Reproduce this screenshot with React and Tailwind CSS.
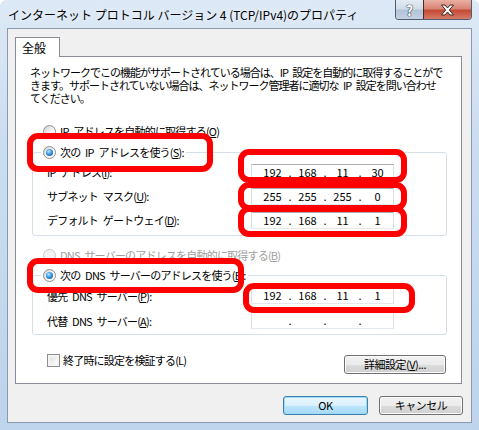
import React from 'react';

// wider space so it survives the negative tracking
const S = '\u2002';

const Radio = ({ checked, disabled }) => (
  <span
    className={`flex h-[13px] w-[13px] shrink-0 items-center justify-center rounded-full border ${
      disabled
        ? 'border-[#c9c9c9] bg-[#f3f3f3]'
        : 'border-[#8e8f8f] bg-[linear-gradient(135deg,#d3d3d3_0%,#f6f6f6_60%,#ffffff_100%)]'
    }`}
  >
    {checked && (
      <span className="h-[7px] w-[7px] rounded-full bg-[radial-gradient(circle_at_40%_35%,#bfe6ff_0%,#3a96de_45%,#0c4b92_100%)]" />
    )}
  </span>
);

const IpField = ({ parts }) => (
  <div className="flex h-[17px] w-[143px] items-center border border-[#abadb3] border-x-[#dbdfe6] border-b-[#e3e9ef] bg-white pl-[5px] text-[11px] leading-[15px]">
    {[0, 1, 2, 3].map((i) => (
      <React.Fragment key={i}>
        <span className="w-[31px] text-center">{parts ? parts[i] : ''}</span>
        {i < 3 && <span className="w-[4px] text-center">.</span>}
      </React.Fragment>
    ))}
  </div>
);

const FieldRow = ({ label, parts, h }) => (
  <div className={`flex items-center pl-[14px] ${h}`}>
    <span className="w-[204px] whitespace-nowrap text-[11px] leading-[16px] tracking-[-0.8px]">{label}</span>
    <IpField parts={parts} />
  </div>
);

const Key = ({ k }) => <span className="underline underline-offset-[1px]">{k}</span>;

const WinButton = ({ children, w, primary }) => (
  <div
    className={`flex h-[19px] items-center justify-center rounded-[3px] border text-[11px] leading-[15px] tracking-[-0.5px] ${w} ${
      primary
        ? 'border-[#3c7fb1] bg-[linear-gradient(180deg,#eaf6fd_0%,#d9f0fc_50%,#bee6fd_51%,#a7d9f5_100%)] shadow-[inset_0_0_0_1px_#9cdaf8]'
        : 'border-[#707070] bg-[linear-gradient(180deg,#f2f2f2_0%,#ebebeb_50%,#dddddd_51%,#cfcfcf_100%)] shadow-[inset_0_0_0_1px_#fbfbfb]'
    }`}
  >
    {children}
  </div>
);

const marks = [
  'left-[27px] top-[133px] w-[186px] h-[39px]',
  'left-[238px] top-[149px] w-[169px] h-[34px]',
  'left-[238px] top-[182px] w-[169px] h-[29px]',
  'left-[238px] top-[206px] w-[169px] h-[31px]',
  'left-[27px] top-[258px] w-[217px] h-[35px]',
  'left-[243px] top-[283px] w-[172px] h-[30px]',
];

export default function App() {
  return (
    <div className="relative h-[430px] w-[479px] overflow-hidden rounded-t-[6px] bg-[linear-gradient(180deg,#dde9f6_0%,#cadcf0_35%,#bed4ec_100%)] font-['Noto_Sans_CJK_JP',sans-serif] text-black">
      {/* title bar */}
      <div className="flex h-[28px] items-start">
        <div className="whitespace-nowrap pl-[8px] pt-[6px] text-[12px] leading-[18px] [text-shadow:0_0_6px_#ffffff]">
          インターネット プロトコル バージョン 4 (TCP/IPv4)のプロパティ
        </div>
        <div className="ml-auto mr-[7px] flex h-[20px] overflow-hidden rounded-b-[4px] border border-t-0 border-[#4f5d6e]">
          <div className="flex w-[27px] items-center justify-center bg-[linear-gradient(180deg,#e4ecf4_0%,#d2dde9_45%,#b3c4d7_55%,#c3d2e2_100%)] text-[14px] font-bold leading-[16px] text-white [text-shadow:0_0_1px_#2d3a48,0_0_1px_#2d3a48,0_0_1px_#2d3a48]">
            ?
          </div>
          <div className="flex w-[48px] items-center justify-center border-l border-[#4f2a24] bg-[linear-gradient(180deg,#eab0a4_0%,#d98575_45%,#c44b36_55%,#d67a66_100%)]">
            <svg width="15" height="12" viewBox="0 0 15 12">
              <path
                d="M1.5 1 L5 1 L7.5 4 L10 1 L13.5 1 L9.3 6 L13.5 11 L10 11 L7.5 8 L5 11 L1.5 11 L5.7 6 Z"
                fill="#ffffff"
                stroke="#3a2a28"
                strokeWidth="1"
                strokeLinejoin="round"
              />
            </svg>
          </div>
        </div>
      </div>

      {/* client area */}
      <div className="mx-[7px] h-[395px] border border-[#8a99ab] bg-[#f0f0f0] px-[7px] pt-[8px]">
        <div className="relative z-10 -mb-px flex h-[20px] w-[45px] items-center border border-b-0 border-[#898c95] bg-white pl-[6px] text-[12px] leading-[16px]">
          全般
        </div>
        <div className="flex h-[328px] w-[447px] flex-col border border-[#898c95] bg-white">
          <p className="mt-[9px] whitespace-nowrap pl-[14px] text-[11px] leading-[13px] tracking-[-1px]">
            ネットワークでこの機能がサポートされている場合は、IP{S}設定を自動的に取得することがで
            <br />
            きます。サポートされていない場合は、ネットワーク管理者に適切な{S}IP{S}設定を問い合わせ
            <br />
            てください。
          </p>

          <div className="mt-[18px] flex h-[16px] items-center gap-[4px] pl-[27px]">
            <Radio />
            <span className="whitespace-nowrap text-[11px] leading-[16px] tracking-[-0.8px]">
              IP{S}アドレスを自動的に取得する(<Key k="O" />)
            </span>
          </div>

          <fieldset className="ml-[16px] mt-[5px] w-[415px] rounded-[3px] border border-[#d5dfe5] pb-[3px]">
            <legend className="ml-[8px] px-[2px]">
              <div className="flex h-[16px] items-center gap-[4px]">
                <Radio checked />
                <span className="whitespace-nowrap text-[11px] leading-[16px] tracking-[-0.8px]">
                  次の{S}IP{S}アドレスを使う(<Key k="S" />):
                </span>
              </div>
            </legend>
            <FieldRow h="h-[24px]" label={<>IP{S}アドレス(<Key k="I" />):</>} parts={['192', '168', '11', '30']} />
            <FieldRow h="h-[24px]" label={<>サブネット{S}マスク(<Key k="U" />):</>} parts={['255', '255', '255', '0']} />
            <FieldRow h="h-[24px]" label={<>デフォルト{S}ゲートウェイ(<Key k="D" />):</>} parts={['192', '168', '11', '1']} />
          </fieldset>

          <div className="mt-[11px] flex h-[16px] items-center gap-[4px] pl-[27px]">
            <Radio disabled />
            <span className="whitespace-nowrap text-[11px] leading-[16px] tracking-[-0.8px] text-[#a0a0a0]">
              DNS{S}サーバーのアドレスを自動的に取得する(<Key k="B" />)
            </span>
          </div>

          <fieldset className="ml-[16px] mt-[4px] w-[415px] rounded-[3px] border border-[#d5dfe5] pb-[1px]">
            <legend className="ml-[8px] px-[2px]">
              <div className="flex h-[16px] items-center gap-[4px]">
                <Radio checked />
                <span className="whitespace-nowrap text-[11px] leading-[16px] tracking-[-0.8px]">
                  次の{S}DNS{S}サーバーのアドレスを使う(<Key k="E" />):
                </span>
              </div>
            </legend>
            <FieldRow h="h-[25px]" label={<>優先{S}DNS{S}サーバー(<Key k="P" />):</>} parts={['192', '168', '11', '1']} />
            <FieldRow h="h-[25px]" label={<>代替{S}DNS{S}サーバー(<Key k="A" />):</>} />
          </fieldset>

          <div className="mt-[17px] flex items-start pl-[31px] pr-[15px]">
            <div className="flex h-[16px] items-center gap-[3px]">
              <span className="h-[13px] w-[13px] border border-[#8e8f8f] bg-[linear-gradient(135deg,#dcdcdc_0%,#f7f7f7_70%,#ffffff_100%)] shadow-[inset_0_0_0_2px_#f4f4f4]" />
              <span className="whitespace-nowrap text-[11px] leading-[16px] tracking-[-0.8px]">
                終了時に設定を検証する(L)
              </span>
            </div>
            <div className="ml-auto mt-[3px]">
              <WinButton w="w-[102px]">
                詳細設定(<Key k="V" />)...
              </WinButton>
            </div>
          </div>
        </div>

        <div className="mt-[12px] flex gap-[11px] pl-[268px]">
          <WinButton w="w-[85px]" primary>
            OK
          </WinButton>
          <WinButton w="w-[84px]">キャンセル</WinButton>
        </div>
      </div>

      {/* red annotation marks */}
      {marks.map((m) => (
        <div key={m} className={`pointer-events-none absolute rounded-[11px] border-[6px] border-[#ff0000] ${m}`} />
      ))}
    </div>
  );
}
